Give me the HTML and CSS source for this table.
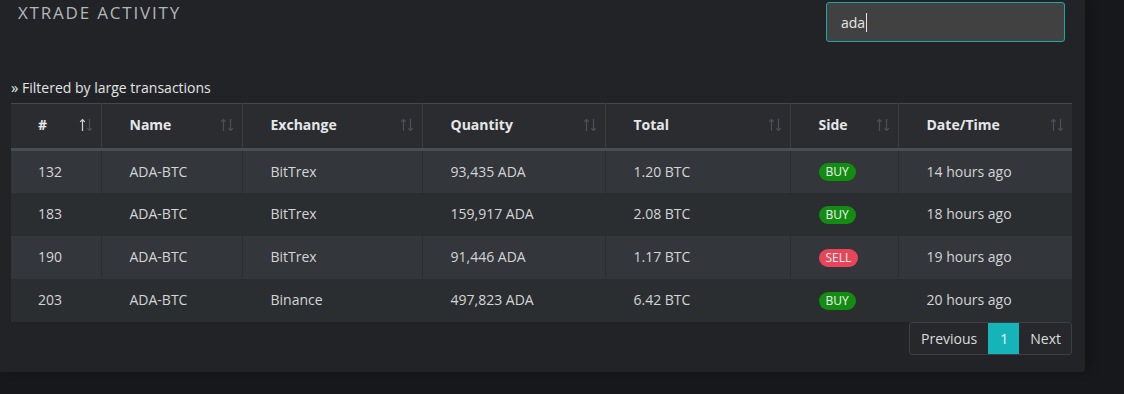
FILE: index.html
```html
<!DOCTYPE html>
<html>
<head>
<meta charset="utf-8">
<link rel="stylesheet" href="styles.css">
</head>
<body>
<div class="panel">
  <div class="top">
    <h2 class="title">XTRADE ACTIVITY</h2>
    <div class="search"><span class="typed">ada</span><span class="caret"></span></div>
  </div>
  <div class="filter"><span class="raquo">»</span> Filtered by large transactions</div>
  <table class="grid">
    <colgroup>
      <col class="c1"><col class="c2"><col class="c3"><col class="c4"><col class="c5"><col class="c6"><col class="c7">
    </colgroup>
    <thead>
      <tr>
        <th class="first">#<svg class="sort asc" viewBox="0 0 14 14"><path class="u" d="M3.5 13V1.5M1.2 3.8L3.5 1.5L5.8 3.8"/><path class="d" d="M10.5 1V12.5M8.2 10.2L10.5 12.5L12.8 10.2"/></svg></th>
        <th>Name<svg class="sort" viewBox="0 0 14 14"><path class="u" d="M3.5 13V1.5M1.2 3.8L3.5 1.5L5.8 3.8"/><path class="d" d="M10.5 1V12.5M8.2 10.2L10.5 12.5L12.8 10.2"/></svg></th>
        <th>Exchange<svg class="sort" viewBox="0 0 14 14"><path class="u" d="M3.5 13V1.5M1.2 3.8L3.5 1.5L5.8 3.8"/><path class="d" d="M10.5 1V12.5M8.2 10.2L10.5 12.5L12.8 10.2"/></svg></th>
        <th>Quantity<svg class="sort" viewBox="0 0 14 14"><path class="u" d="M3.5 13V1.5M1.2 3.8L3.5 1.5L5.8 3.8"/><path class="d" d="M10.5 1V12.5M8.2 10.2L10.5 12.5L12.8 10.2"/></svg></th>
        <th>Total<svg class="sort" viewBox="0 0 14 14"><path class="u" d="M3.5 13V1.5M1.2 3.8L3.5 1.5L5.8 3.8"/><path class="d" d="M10.5 1V12.5M8.2 10.2L10.5 12.5L12.8 10.2"/></svg></th>
        <th>Side<svg class="sort" viewBox="0 0 14 14"><path class="u" d="M3.5 13V1.5M1.2 3.8L3.5 1.5L5.8 3.8"/><path class="d" d="M10.5 1V12.5M8.2 10.2L10.5 12.5L12.8 10.2"/></svg></th>
        <th>Date/Time<svg class="sort" viewBox="0 0 14 14"><path class="u" d="M3.5 13V1.5M1.2 3.8L3.5 1.5L5.8 3.8"/><path class="d" d="M10.5 1V12.5M8.2 10.2L10.5 12.5L12.8 10.2"/></svg></th>
      </tr>
    </thead>
    <tbody>
      <tr class="odd"><td class="first">132</td><td>ADA-BTC</td><td>BitTrex</td><td>93,435 ADA</td><td>1.20 BTC</td><td><span class="badge buy">BUY</span></td><td>14 hours ago</td></tr>
      <tr class="even"><td class="first">183</td><td>ADA-BTC</td><td>BitTrex</td><td>159,917 ADA</td><td>2.08 BTC</td><td><span class="badge buy">BUY</span></td><td>18 hours ago</td></tr>
      <tr class="odd"><td class="first">190</td><td>ADA-BTC</td><td>BitTrex</td><td>91,446 ADA</td><td>1.17 BTC</td><td><span class="badge sell">SELL</span></td><td>19 hours ago</td></tr>
      <tr class="even"><td class="first">203</td><td>ADA-BTC</td><td>Binance</td><td>497,823 ADA</td><td>6.42 BTC</td><td><span class="badge buy">BUY</span></td><td>20 hours ago</td></tr>
    </tbody>
  </table>
  <div class="pager-row">
    <div class="pager">
      <span class="pg">Previous</span>
      <span class="pg active">1</span>
      <span class="pg">Next</span>
    </div>
  </div>
</div>
</body>
</html>
```

FILE: styles.css
```css
html, body {
  margin: 0;
  padding: 0;
  background: #17181b;
  font-family: "Open Sans", "Liberation Sans", sans-serif;
  overflow: hidden;
}
body {
  width: 1124px;
  height: 394px;
}
.panel {
  width: 1085px;
  height: 372px;
  box-sizing: border-box;
  background: #212327;
  border-radius: 0 0 4px 0;
  padding: 0 13px 0 11px;
  box-shadow: 6px 0 10px rgba(0,0,0,0.15);
}
.top {
  display: flex;
  justify-content: space-between;
  align-items: flex-start;
  padding: 2px 7px 0 7px;
  height: 41px;
}
.title {
  margin: 1px 0 0 0;
  font-family: "Open Sans", "Liberation Sans", sans-serif;
  font-weight: 400;
  font-size: 17px;
  letter-spacing: 1.8px;
  color: #b4b7ba;
  line-height: 20px;
}
.search {
  width: 239px;
  height: 40px;
  box-sizing: border-box;
  border: 1px solid #1aa8a3;
  border-radius: 3px;
  background: #414141;
  display: flex;
  align-items: center;
  padding-left: 14px;
  color: #e6e6e6;
  font-size: 14px;
}
.caret {
  display: inline-block;
  width: 1px;
  height: 19px;
  background: #e6e6e6;
  margin-left: 1px;
}
.filter {
  margin-top: 34px;
  font-size: 14px;
  line-height: 20px;
  color: #e4e4e4;
  height: 26px;
}
.raquo {
  font-size: 15px;
}
.grid {
  width: 1061px;
  border-collapse: collapse;
  table-layout: fixed;
  font-size: 14px;
  color: #d4d5d6;
}
.c1 { width: 90px; }
.c2 { width: 141px; }
.c3 { width: 180px; }
.c4 { width: 183px; }
.c5 { width: 185px; }
.c6 { width: 108px; }
.c7 { width: 174px; }
.grid thead tr {
  background: #2a2c30;
  border-top: 1px solid #45484c;
  border-bottom: 3px solid #4b4e51;
}
.grid th {
  height: 46px;
  padding: 0 0 3px 28px;
  text-align: left;
  font-weight: 700;
  color: #e6e7e8;
  position: relative;
  border-left: 1px solid #3a3d41;
  box-sizing: border-box;
}
.grid th.first {
  border-left: none;
  padding-left: 27px;
}
.sort {
  position: absolute;
  right: 8px;
  top: 14px;
  width: 14px;
  height: 14px;
  fill: none;
  stroke-width: 1.2;
}
.sort .u, .sort .d {
  stroke: #4d5157;
}
.sort.asc .u {
  stroke: #d0d2d4;
}
.grid td {
  height: 43px;
  padding: 0 0 1px 28px;
  box-sizing: border-box;
  border-left: 1px solid #2a2d31;
}
.grid td.first {
  border-left: none;
  padding-left: 27px;
}
.grid tr.odd { background: #33363a; }
.grid tr.even { background: #2b2e31; }
.badge {
  display: inline-block;
  padding: 0 7px;
  height: 18px;
  line-height: 18px;
  border-radius: 9px;
  font-size: 12px;
  color: #f2f2f2;
}
.buy { background: #138c12; }
.sell { background: #e9455a; }
.pager-row {
  display: flex;
  justify-content: flex-end;
}
.pager {
  display: flex;
  height: 33px;
  box-sizing: border-box;
  border: 1px solid #3c3f43;
  border-radius: 3px;
  background: #26282c;
  font-size: 14px;
  color: #dcdcdc;
  overflow: hidden;
}
.pg {
  display: flex;
  align-items: center;
  padding: 0 11px;
}
.pg:last-child {
  padding-right: 10px;
}
.pg.active {
  background: #14b4b8;
  color: #e8f8f8;
  padding: 0 11px 0 12px;
}
```
